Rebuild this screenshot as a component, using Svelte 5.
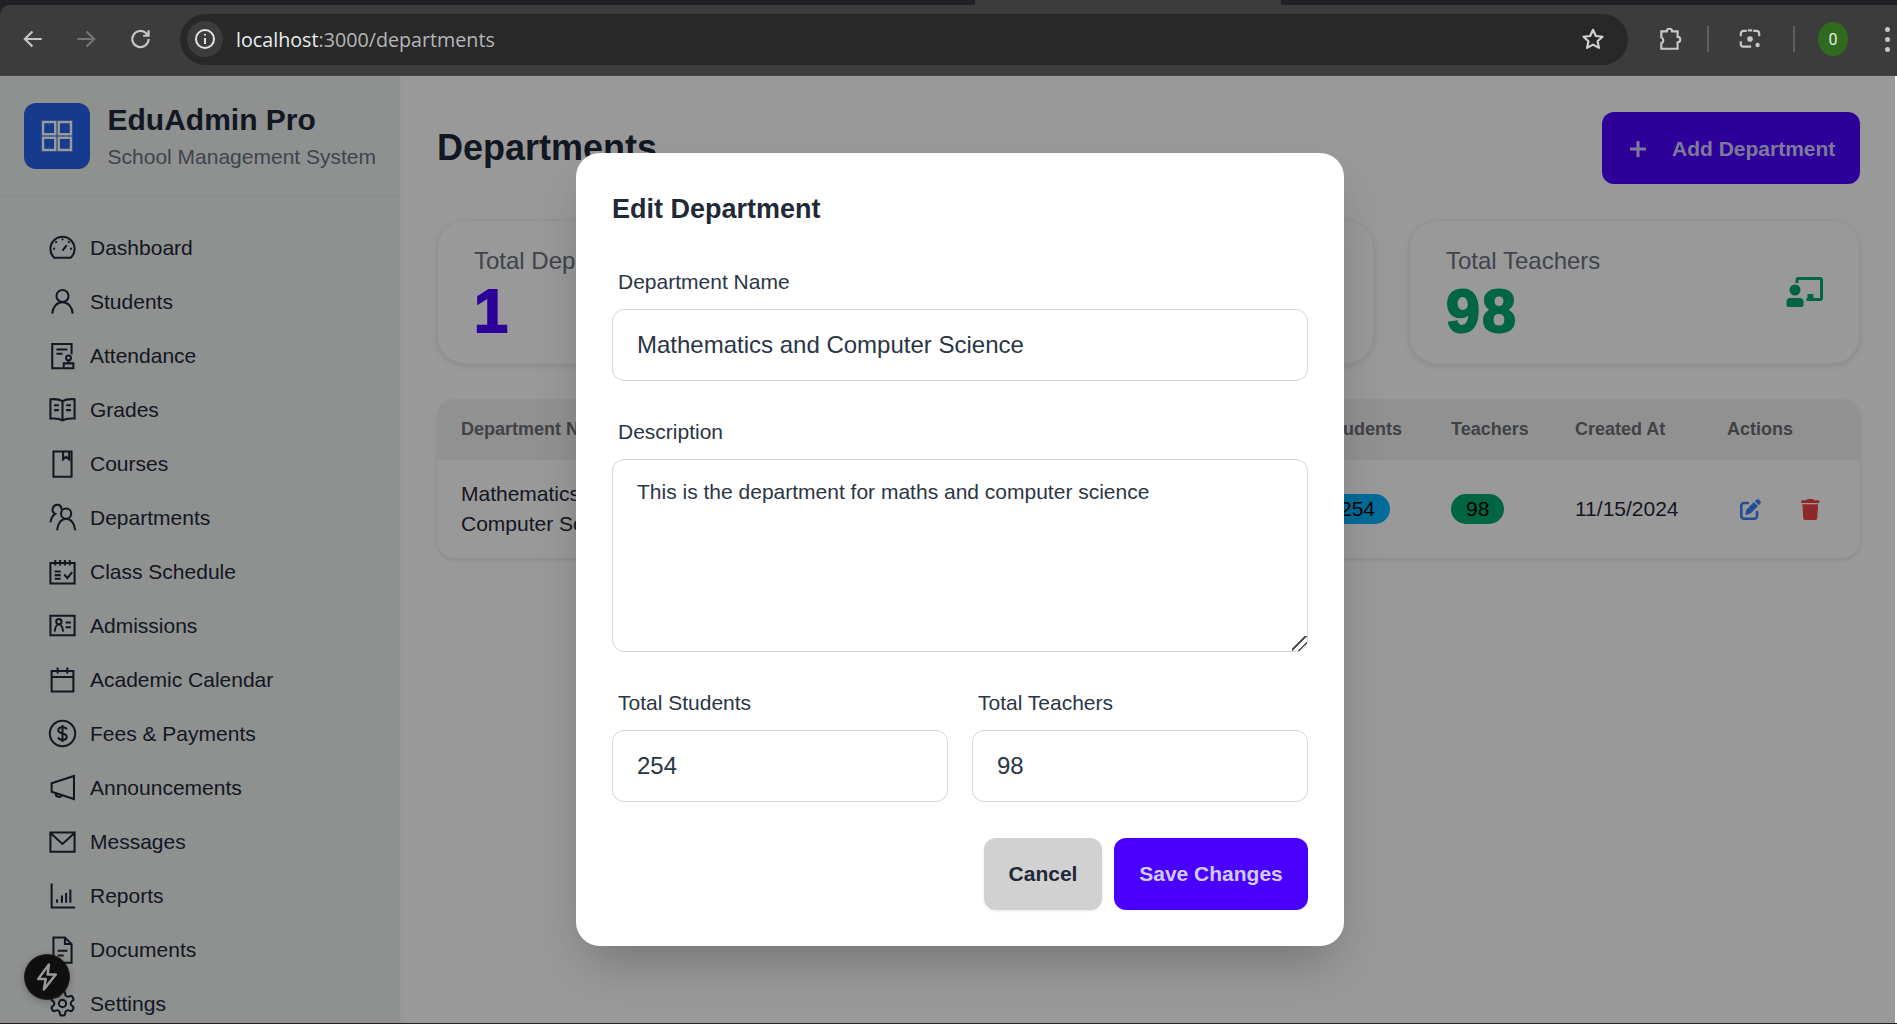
<script>
	const navItems = [
		{ label: 'Dashboard', d: 'M5.2 20.500a10 10 0 1 1 13.600 0z M12 14.500l3.500-4.500 M12 4.500v1.500 M6.200 7l1 1 M17.800 7l-1 1 M4.200 13h1.600 M18.200 13h1.600' },
		{ label: 'Students', d: 'M12 12.500a5 5 0 1 0 0-10 5 5 0 0 0 0 10z M3.500 22c.4-5.500 4-9.500 8.500-9.500s8.100 4 8.500 9.500' },
		{ label: 'Attendance', d: 'M19.500 11V2.500H3.500v20H12 M7 7h9 M7 10.500h5 M17 12a2 2 0 1 0 0 4 2 2 0 0 0 0-4z M17 16v2 M13 22.500v-4h8v4z' },
		{ label: 'Grades', d: 'M12 5C10 3.800 6 3.200 2 3.500V19.500c4-.3 8 .2 10 1.500 2-1.300 6-1.800 10-1.500V3.500C18 3.200 14 3.800 12 5z M12 5v16 M5 8.500h4 M5 12.500h4 M15 8.500h4 M15 12.500h4' },
		{ label: 'Courses', d: 'M4.500 2h15v21h-15z M12.500 2v6.500l2.500-2 2.500 2V2' },
		{ label: 'Departments', d: 'M15 13a4.200 4.200 0 1 0 0-8.400 4.200 4.200 0 0 0 0 8.400z M7.500 22.500c.3-5.300 3.500-9.500 7.500-9.500s7.200 4.200 7.500 9.500 M11.200 5.500A4 4 0 0 0 8.500 1.500 4 4 0 0 0 6 9c-2.300 1.500-3.500 4-4 7' },
		{ label: 'Class Schedule', d: 'M2 5h20v17H2z M6 2.500V7 M10 2.500V7 M14 2.500V7 M18 2.500V7 M5.500 12h5 M5.500 15h5 M5.500 18h5 M13.500 14.500l2.500 3 4-5' },
		{ label: 'Admissions', d: 'M2 4h20v16H2z M9 11a2.200 2.200 0 1 0 0-4.400A2.200 2.200 0 0 0 9 11z M5.500 17c.3-3 1.700-6 3.500-6s3.200 3 3.500 6 M14.500 9.500h4.500 M14.500 13.500h4.500' },
		{ label: 'Academic Calendar', d: 'M3 5h18v17H3z M3 10h18 M8 2v5 M16 2v5' },
		{ label: 'Fees & Payments', d: 'M12 22.500a10.500 10.500 0 1 0 0-21 10.500 10.500 0 0 0 0 21z M15.500 8.500C15 7.200 13.500 6.800 12 6.800c-2 0-3.500.9-3.500 2.600 0 3.600 7 1.700 7 5.200 0 1.700-1.500 2.600-3.500 2.600-1.700 0-3.200-.6-3.700-2 M12 5v14' },
		{ label: 'Announcements', d: 'M21.500 2.500v19L3 15.500v-7z M3 8.500v7 M6.500 16.800a2.500 2.500 0 0 0 5 .9' },
		{ label: 'Messages', d: 'M2 4.500h20v16H2z M2 5l10 9 10-9' },
		{ label: 'Reports', d: 'M3 2v20h19.500 M7.500 18v-3 M11.500 18v-6 M15 18v-8 M18.500 18V7' },
		{ label: 'Documents', d: 'M4.500 2h9.500l5.500 5.500V23h-15z M14 2v5.500h5.500 M8 13h8 M8 17h5' },
		{ label: 'Settings', d: 'M12.220 2h-.44a2 2 0 0 0-2 2v.18a2 2 0 0 1-1 1.730l-.43.25a2 2 0 0 1-2 0l-.15-.08a2 2 0 0 0-2.730.73l-.22.38a2 2 0 0 0 .73 2.730l.15.1a2 2 0 0 1 1 1.720v.51a2 2 0 0 1-1 1.740l-.15.09a2 2 0 0 0-.73 2.730l.22.38a2 2 0 0 0 2.730.73l.15-.08a2 2 0 0 1 2 0l.43.25a2 2 0 0 1 1 1.730V20a2 2 0 0 0 2 2h.44a2 2 0 0 0 2-2v-.18a2 2 0 0 1 1-1.730l.43-.25a2 2 0 0 1 2 0l.15.08a2 2 0 0 0 2.730-.73l.22-.39a2 2 0 0 0-.73-2.730l-.15-.08a2 2 0 0 1-1-1.740v-.5a2 2 0 0 1 1-1.740l.15-.09a2 2 0 0 0 .73-2.730l-.22-.38a2 2 0 0 0-2.730-.73l-.15.08a2 2 0 0 1-2 0l-.43-.25a2 2 0 0 1-1-1.730V4a2 2 0 0 0-2-2z M12 15a3 3 0 1 0 0-6 3 3 0 0 0 0 6z' }
	];

	let department = $state({
		name: 'Mathematics and Computer Science',
		description: 'This is the department for maths and computer science',
		students: 254,
		teachers: 98
	});
</script>

<div class="window">
	<div class="chrome">
		<div class="tabstrip"><div class="tab"></div></div>
		<header class="toolbar">
			<svg class="tb-icon" viewBox="0 0 24 24"><path d="M20 12H5 M11.500 5L4.500 12l7 7" /></svg>
			<svg class="tb-icon dim" viewBox="0 0 24 24"><path d="M4 12h15 M12.500 5l7 7-7 7" /></svg>
			<svg class="tb-icon reload" viewBox="0 0 24 24"><path d="M19 12a7.500 7.500 0 1 1-2.200-5.300L19 9 M19 4v5h-5" /></svg>
			<div class="urlbar">
				<span class="site-info">
					<svg viewBox="0 0 24 24"><circle cx="12" cy="12" r="9" /><path d="M12 11v6 M12 7v1.500" /></svg>
				</span>
				<span class="url"><b>localhost</b>:3000/departments</span>
				<svg class="star" viewBox="0 0 24 24"><path d="M12 3.500l2.600 5.700 6.200.7-4.600 4.200 1.300 6.100L12 17.200l-5.500 3 1.300-6.100-4.600-4.200 6.200-.7z" /></svg>
			</div>
			<svg class="tb-icon puzzle" viewBox="0 0 24 24"><path d="M4 5h5a2.500 2.500 0 0 1 5 0h5v5a2.500 2.500 0 0 1 0 5v6H4v-5a3 3 0 0 0 0-5.500z" /></svg>
			<span class="divider"></span>
			<svg class="tb-icon lens" viewBox="0 0 24 24"><path d="M9 4.500H6a2.500 2.500 0 0 0-2.500 2.500v2.500 M15 4.500h3A2.500 2.500 0 0 1 20.500 7v2.500 M3.500 14v2.500A2.500 2.500 0 0 0 6 19h7 M10 4h4" /><circle class="dot" cx="12" cy="12" r="2.600" /><circle class="dot" cx="19" cy="17.500" r="2" /></svg>
			<span class="divider second"></span>
			<span class="avatar">0</span>
			<span class="kebab"><i></i><i></i><i></i></span>
		</header>
	</div>

	<div class="page">
		<aside class="sidebar">
			<div class="brand">
				<div class="logo">
					<svg viewBox="0 0 24 24"><path d="M4 4h7v7H4z M13 4h7v7h-7z M4 13h7v7H4z M13 13h7v7h-7z" /></svg>
				</div>
				<div>
					<div class="brand-name">EduAdmin Pro</div>
					<div class="brand-sub">School Management System</div>
				</div>
			</div>
			<nav class="nav">
				{#each navItems as item}
					<a class="nav-item" href="#top">
						<svg viewBox="0 0 24 24"><path d={item.d} /></svg>
						<span>{item.label}</span>
					</a>
				{/each}
			</nav>
		</aside>

		<main class="main">
			<div class="page-head">
				<h1>Departments</h1>
				<button class="add-btn">
					<svg viewBox="0 0 24 24"><path d="M12 4v16 M4 12h16" /></svg>
					Add Department
				</button>
			</div>

			<section class="stats">
				<div class="stat">
					<div>
						<div class="stat-title">Total Departments</div>
						<div class="stat-value primary">1</div>
					</div>
				</div>
				<div class="stat">
					<div>
						<div class="stat-title">Total Students</div>
						<div class="stat-value sky">254</div>
					</div>
				</div>
				<div class="stat">
					<div>
						<div class="stat-title">Total Teachers</div>
						<div class="stat-value success">98</div>
					</div>
					<svg class="stat-icon" viewBox="0 0 36 30">
						<path class="board" d="M10.500 6V3A1.500 1.500 0 0 1 12 1.500h21.500A1.500 1.500 0 0 1 35 3v18a1.500 1.500 0 0 1-1.500 1.500H20" />
						<path d="M21 17h6v6h-6z" />
						<circle cx="8.500" cy="13" r="5.500" />
						<path d="M0 28v-3a4 4 0 0 1 4-4h9a4 4 0 0 1 4 4v3a2 2 0 0 1-2 2H2a2 2 0 0 1-2-2z" />
					</svg>
				</div>
			</section>

			<section class="table-card">
				<table>
					<thead>
						<tr>
							<th class="c-name">Department Name</th>
							<th class="c-desc">Description</th>
							<th class="c-students">Students</th>
							<th class="c-teachers">Teachers</th>
							<th class="c-created">Created At</th>
							<th>Actions</th>
						</tr>
					</thead>
					<tbody>
						<tr>
							<td>Mathematics and Computer Science</td>
							<td>{department.description}</td>
							<td><span class="badge b-info">254</span></td>
							<td><span class="badge b-success">98</span></td>
							<td>11/15/2024</td>
							<td>
								<div class="actions">
									<svg class="a-edit" viewBox="0 0 512 512"><path d="M471.600 21.700c-21.900-21.900-57.300-21.900-79.200 0L362.300 51.700l97.900 97.900 30.100-30.100c21.900-21.900 21.900-57.300 0-79.200L471.600 21.700zM172.400 241.700c-6.100 6.100-10.800 13.600-13.500 21.900l-29.600 88.800c-2.900 8.600-.6 18.100 5.800 24.600s15.900 8.700 24.600 5.800l88.800-29.600c8.200-2.700 15.700-7.400 21.900-13.500L437.700 172.300 339.700 74.300 172.400 241.700zM96 64C43 64 0 107 0 160V416c0 53 43 96 96 96H352c53 0 96-43 96-96V320c0-17.700-14.300-32-32-32s-32 14.300-32 32v96c0 17.700-14.300 32-32 32H96c-17.700 0-32-14.300-32-32V160c0-17.700 14.300-32 32-32h96c17.700 0 32-14.300 32-32s-14.300-32-32-32H96z" /></svg>
									<svg class="a-trash" viewBox="0 0 448 512"><path d="M135.200 17.700L128 32H32C14.300 32 0 46.300 0 64S14.300 96 32 96H416c17.700 0 32-14.300 32-32s-14.300-32-32-32H320l-7.200-14.300C307.400 6.800 296.300 0 284.200 0H163.800c-12.100 0-23.200 6.800-28.600 17.700zM416 128H32L53.200 467c1.600 25.300 22.600 45 47.900 45H346.900c25.300 0 46.300-19.700 47.900-45L416 128z" /></svg>
								</div>
							</td>
						</tr>
					</tbody>
				</table>
			</section>
		</main>

		<button class="fab" aria-label="Quick actions">
			<svg viewBox="0 0 24 24"><path d="M13.500 2L5 13.500h6L9.500 22 19 10h-6.500z" /></svg>
		</button>

		<div class="overlay">
			<form class="modal">
				<h2>Edit Department</h2>
				<div class="fields">
					<label class="field">
						<span>Department Name</span>
						<input type="text" bind:value={department.name} />
					</label>
					<label class="field">
						<span>Description</span>
						<textarea bind:value={department.description}></textarea>
					</label>
					<div class="two-col">
						<label class="field">
							<span>Total Students</span>
							<input type="text" bind:value={department.students} />
						</label>
						<label class="field">
							<span>Total Teachers</span>
							<input type="text" bind:value={department.teachers} />
						</label>
					</div>
				</div>
				<div class="modal-actions">
					<button type="button" class="btn-cancel">Cancel</button>
					<button type="button" class="btn-save">Save Changes</button>
				</div>
			</form>
		</div>
	</div>
	<div class="bottom-line"></div>
</div>

<style>
	:global(body) {
		margin: 0;
		overflow: hidden;
		font-family: 'Liberation Sans', Arial, sans-serif;
	}

	.window {
		width: 1897px;
		height: 1024px;
		display: flex;
		flex-direction: column;
		background: #fff;
		overflow: hidden;
	}

	.chrome {
		flex: none;
		background: #202124;
	}

	.tabstrip {
		height: 5px;
		display: flex;
		padding-left: 975px;
	}

	.tab {
		width: 306px;
		background: #3c3c3c;
	}

	.toolbar {
		height: 71px;
		display: flex;
		align-items: center;
		background: #3c3c3c;
		border-top-left-radius: 10px;
		border-bottom: 1px solid #444;
		box-sizing: border-box;
		padding: 0 0 2px 20px;
	}

	.tb-icon {
		width: 26px;
		height: 26px;
		fill: none;
		stroke: #c7c7c7;
		stroke-width: 2;
		margin-right: 27px;
		flex: none;
	}

	.tb-icon.dim {
		stroke: #757575;
	}

	.tb-icon.reload {
		margin-left: 2px;
		margin-right: 26px;
	}

	.urlbar {
		width: 1448px;
		height: 51px;
		margin-right: 29px;
		flex: none;
		display: flex;
		align-items: center;
		background: #282828;
		border-radius: 26px;
		box-sizing: border-box;
		padding: 0 22px 0 7px;
	}

	.site-info {
		width: 36px;
		height: 36px;
		border-radius: 50%;
		background: #3c3c3c;
		display: flex;
		align-items: center;
		justify-content: center;
		margin-right: 13px;
	}

	.site-info svg {
		width: 24px;
		height: 24px;
		fill: none;
		stroke: #e3e3e3;
		stroke-width: 2;
	}

	.url {
		flex: 1;
		font-family: 'Open Sans', Roboto, sans-serif;
		font-size: 19.7px;
		color: #b4b6b9;
	}

	.url b {
		font-weight: 400;
		color: #eceef0;
	}

	.star {
		width: 26px;
		height: 26px;
		fill: none;
		stroke: #d2d2d2;
		stroke-width: 2;
		stroke-linejoin: round;
	}

	.puzzle,
	.lens {
		margin-right: 0;
	}

	.divider {
		width: 2px;
		height: 26px;
		background: #5f5f5f;
		margin: 0 28px 0 24px;
		flex: none;
	}

	.divider.second {
		margin-left: 30px;
		margin-right: 23px;
	}

	.dot {
		fill: #c7c7c7;
		stroke: none;
	}

	.avatar {
		width: 30px;
		height: 34px;
		border-radius: 50%;
		background: #2f6a1e;
		color: #e6f0e0;
		font-family: Roboto, sans-serif;
		font-size: 16px;
		display: flex;
		align-items: center;
		justify-content: center;
	}

	.kebab {
		display: flex;
		flex-direction: column;
		gap: 5px;
		margin-left: 37px;
	}

	.kebab i {
		width: 5px;
		height: 5px;
		border-radius: 50%;
		background: #c7c7c7;
	}

	.page {
		position: relative;
		flex: 1;
		display: flex;
		min-height: 0;
		width: 1895px;
		overflow: hidden;
		color: #1f2937;
	}

	.sidebar {
		width: 400px;
		flex: none;
		background: #eef0f0;
		box-shadow: 2px 0 6px rgba(0, 0, 0, 0.03);
	}

	.brand {
		height: 120px;
		box-sizing: border-box;
		display: flex;
		align-items: center;
		gap: 18px;
		padding: 0 24px;
		border-bottom: 1px solid #e2e4e8;
	}

	.logo {
		width: 66px;
		height: 66px;
		border-radius: 12px;
		background: #2563eb;
		display: flex;
		align-items: center;
		justify-content: center;
	}

	.logo svg {
		width: 42px;
		height: 42px;
		fill: none;
		stroke: #fff;
		stroke-width: 1.4;
	}

	.brand-name {
		font-size: 30px;
		font-weight: 700;
		line-height: 42px;
		margin-bottom: 1px;
	}

	.brand-sub {
		font-size: 21px;
		line-height: 30px;
		color: #6b7280;
		white-space: nowrap;
	}

	.nav {
		padding: 24.500px 0 0 48px;
		display: flex;
		flex-direction: column;
	}

	.nav-item {
		height: 54px;
		flex: none;
		display: flex;
		align-items: center;
		gap: 13px;
		color: #1f2937;
		text-decoration: none;
		font-size: 21px;
	}

	.nav-item svg {
		width: 29px;
		height: 29px;
		fill: none;
		stroke: currentColor;
		stroke-width: 1.7;
	}

	.main {
		flex: 1;
		min-width: 0;
		padding: 36px 35px 0 37px;
	}

	.page-head {
		height: 72px;
		display: flex;
		align-items: center;
		justify-content: space-between;
	}

	h1 {
		margin: 0;
		font-size: 36px;
		font-weight: 700;
	}

	.add-btn {
		height: 72px;
		width: 258px;
		border: none;
		border-radius: 12px;
		background: #4a00ff;
		color: #d0ccff;
		font: 700 21px 'Liberation Sans', Arial, sans-serif;
		display: flex;
		align-items: center;
		gap: 22px;
		padding: 2px 24px 0;
		box-sizing: border-box;
		white-space: nowrap;
	}

	.add-btn svg {
		width: 24px;
		height: 24px;
		fill: none;
		stroke: currentColor;
		stroke-width: 3;
	}

	.stats {
		margin-top: 36px;
		display: grid;
		grid-template-columns: repeat(3, 1fr);
		gap: 35px;
	}

	.stat {
		height: 144px;
		box-sizing: border-box;
		padding: 24px 36px;
		border-radius: 28px;
		background: #fff;
		border: 1px solid #f4f4f4;
		box-shadow: 0 2px 6px rgba(0, 0, 0, 0.1);
		display: flex;
		justify-content: space-between;
	}

	.stat-title {
		font-size: 24px;
		line-height: 32px;
		color: #6b7280;
	}

	.stat-value {
		font-size: 61px;
		line-height: 68px;
		font-weight: 700;
		letter-spacing: 2px;
		-webkit-text-stroke: 2px currentColor;
	}

	.primary {
		color: #4a00ff;
	}

	.sky {
		color: #00b5ff;
	}

	.success {
		color: #00a96e;
	}

	.stat-icon {
		width: 37px;
		height: 30px;
		margin-top: 32px;
		fill: #00a96e;
	}

	.board {
		fill: none;
		stroke: #00a96e;
		stroke-width: 3;
	}

	.table-card {
		margin-top: 35px;
		border-radius: 18px;
		background: #fff;
		box-shadow: 0 2px 4px rgba(0, 0, 0, 0.1);
		overflow: hidden;
	}

	table {
		width: 100%;
		border-collapse: collapse;
		table-layout: fixed;
		font-size: 21px;
		color: #1f2937;
	}

	th,
	td {
		box-sizing: border-box;
		padding: 0 24px;
	}

	th {
		height: 61px;
		text-align: left;
		background: #f2f2f2;
		font-size: 18px;
		font-weight: 700;
		color: #6b6f76;
	}

	td {
		height: 98px;
		line-height: 30px;
		color: #1f2937;
	}

	.c-name {
		width: 260px;
	}

	.c-desc {
		width: 604px;
	}

	.c-students {
		width: 126px;
	}

	.c-teachers {
		width: 124px;
	}

	.c-created {
		width: 152px;
	}

	.badge {
		display: inline-block;
		height: 30px;
		line-height: 30px;
		padding: 0 15px;
		border-radius: 15px;
		color: #000;
	}

	.b-info {
		background: #00b5ff;
	}

	.b-success {
		background: #00a96e;
	}

	.actions {
		display: flex;
		gap: 40px;
		align-items: center;
		padding-left: 13px;
	}

	.a-edit {
		width: 21px;
		height: 21px;
		flex: none;
		fill: #3b82f6;
	}

	.a-trash {
		width: 18.500px;
		height: 21px;
		flex: none;
		fill: #ef4444;
	}

	.fab {
		position: absolute;
		left: 25px;
		bottom: 24px;
		width: 44px;
		height: 44px;
		border-radius: 50%;
		border: none;
		padding: 0;
		background: #1a1a1a;
		box-shadow: 0 0 0 1px #333, 0 2px 8px rgba(0, 0, 0, 0.3);
		z-index: 5;
		display: flex;
		align-items: center;
		justify-content: center;
	}

	.fab svg {
		width: 30px;
		height: 30px;
		fill: none;
		stroke: #fff;
		stroke-width: 2;
		stroke-linejoin: round;
	}

	.overlay {
		position: absolute;
		inset: 0;
		z-index: 10;
		background: rgba(0, 0, 0, 0.4);
		display: flex;
		align-items: flex-start;
		padding: 77px 0 0 576px;
		box-sizing: border-box;
	}

	.modal {
		width: 768px;
		box-sizing: border-box;
		background: #fff;
		border-radius: 24px;
		padding: 36px;
		box-shadow: 0 25px 50px -12px rgba(0, 0, 0, 0.25);
		display: flex;
		flex-direction: column;
		color: #1f2937;
	}

	h2 {
		margin: 0 0 26px;
		font-size: 27px;
		line-height: 40px;
		font-weight: 700;
	}

	.fields {
		display: flex;
		flex-direction: column;
		gap: 24px;
	}

	.field {
		display: flex;
		flex-direction: column;
		color: #2b3544;
	}

	.field > span {
		font-size: 21px;
		line-height: 30px;
		padding: 11.500px 6px 12.500px;
	}

	input,
	textarea {
		box-sizing: border-box;
		width: 100%;
		border: 1px solid #d4d5d6;
		border-radius: 12px;
		background: #fff;
		font-family: 'Liberation Sans', Arial, sans-serif;
		color: #2b3544;
		outline: none;
		display: block;
	}

	input {
		height: 72px;
		padding: 0 24px;
		font-size: 24px;
	}

	textarea {
		height: 193px;
		padding: 17px 24px;
		font-size: 21px;
		line-height: 30px;
	}

	textarea::-webkit-resizer {
		background: linear-gradient(135deg, transparent 42%, #555 42% 50%, transparent 50% 68%, #555 68% 76%, transparent 76%);
	}

	.two-col {
		display: grid;
		grid-template-columns: 1fr 1fr;
		gap: 24px;
	}

	.modal-actions {
		margin-top: 36px;
		display: flex;
		justify-content: flex-end;
		gap: 12px;
	}

	.modal-actions button {
		height: 72px;
		border: none;
		border-radius: 12px;
		font: 700 21px 'Liberation Sans', Arial, sans-serif;
	}

	.btn-cancel {
		background: #d1d1d1;
		color: #1f2937;
		width: 118px;
		box-shadow: 0 1px 3px rgba(0, 0, 0, 0.1);
	}

	.btn-save {
		background: #4a00ff;
		color: #d0ccff;
		width: 194px;
	}

	.bottom-line {
		height: 1px;
		flex: none;
		background: #222;
	}
</style>
